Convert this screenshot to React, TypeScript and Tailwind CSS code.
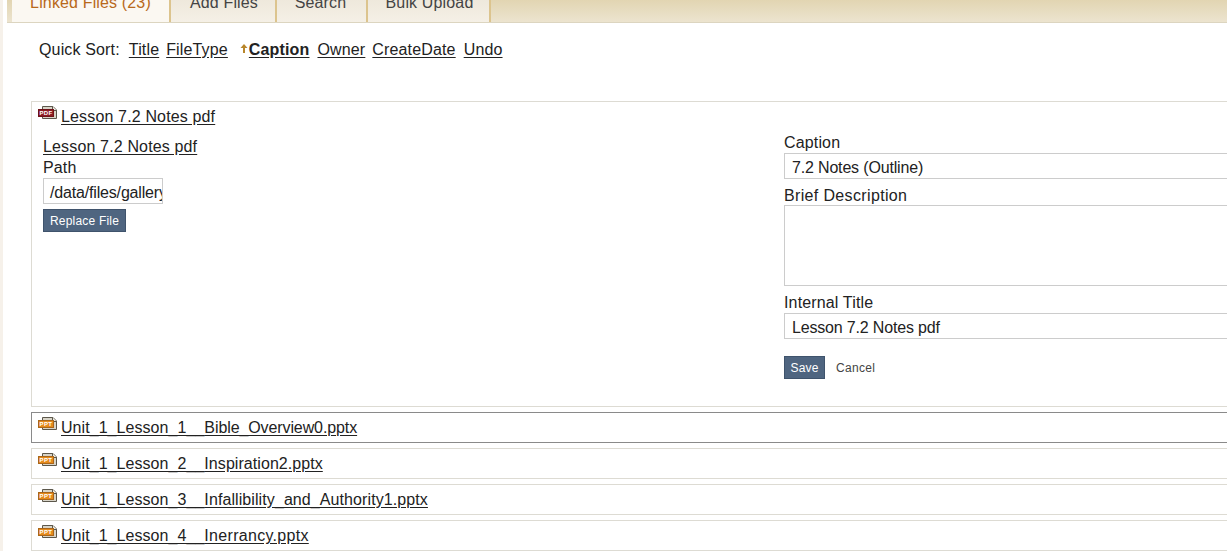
import React from 'react';

function FileIcon({ label, dark, light }: { label: string; dark: string; light: string }) {
  return (
    <svg width="19" height="14" viewBox="0 0 19 14" className="shrink-0">
      <path d="M4.5 0.5H15L18.5 4V12.5H4.5Z" fill="#d8d4c8" stroke="#5c574b" />
      <path d="M14.5 0.5V4.5H18.5" fill="#f4f1e8" stroke="#5c574b" />
      <rect x="0.5" y="3.5" width="15" height="7" fill={dark} stroke={light} />
      <text x="8" y="9.4" textAnchor="middle" fontSize="6" fontWeight="700" letterSpacing="0.4" fill="#fff" fontFamily="'Liberation Sans', sans-serif">
        {label}
      </text>
    </svg>
  );
}

const PdfIcon = () => <FileIcon label="PDF" dark="#8c1c22" light="#6e1218" />;
const PptIcon = () => <FileIcon label="PPT" dark="#e58a1c" light="#a9661a" />;

function Tab({ label, active, className }: { label: string; active?: boolean; className: string }) {
  return (
    <div
      className={`h-[26px] -mt-[4px] flex items-start justify-center border-r-2 border-[#dcc48e] ${className} ${
        active ? 'bg-[#fbf8f2] text-[#b8691b]' : 'bg-gradient-to-b from-[#ede7da] to-[#f5f0e6] text-[#444444]'
      }`}
    >
      <span className="leading-[18px] -mt-[2px]">{label}</span>
    </div>
  );
}

function FileRow({ prefix, name, track, selected }: { prefix: string; name: string; track: string; selected?: boolean }) {
  return (
    <div className={`h-[31px] border flex items-start pl-[6px] ${selected ? 'border-[#8a8a8a]' : 'border-[#dddbd3]'}`}>
      <div className="mt-[4px]">
        <PptIcon />
      </div>
      <a className="ml-[4px] mt-[6px] leading-[18px] underline underline-offset-2 whitespace-nowrap tracking-[0.06px]">
        {prefix}
        <span className={track}>{name}</span>
      </a>
    </div>
  );
}

function Field({ label, value }: { label: string; value: string }) {
  return (
    <div>
      <div className="leading-[18px]">{label}</div>
      <div className="h-[26px] mt-[1px] border border-[#cccccc] pl-[7px] leading-[27px] bg-white tracking-[-0.17px]">{value}</div>
    </div>
  );
}

export default function App() {
  return (
    <div className="w-[1227px] h-[551px] overflow-hidden bg-white border-l-[3px] border-[#f6f1ea] text-[16px] tracking-[0.15px] text-[#222222] font-['Liberation_Sans',Arial,sans-serif]">
      <div className="h-[23px] ml-[4px] overflow-hidden flex pl-[5px] bg-gradient-to-b from-[#e2d5b2] to-[#ece4cf] border-b border-[#dcd5c0]">
        <Tab label="Linked Files (23)" active className="w-[159px]" />
        <Tab label="Add Files" className="w-[106px] pl-[2px]" />
        <Tab label="Search" className="w-[91px] pr-[2px]" />
        <Tab label="Bulk Upload" className="w-[123px] pl-[2px]" />
      </div>

      <div className="w-[1300px] pl-[28px]">
        <div className="flex items-center h-[18px] mt-[18px] pl-[8px] whitespace-nowrap">
          <span>Quick Sort:</span>
          <a className="ml-[9px] underline underline-offset-2">Title</a>
          <a className="ml-[7px] underline underline-offset-2">FileType</a>
          <svg width="8" height="9" viewBox="0 0 8 9" className="ml-[12px] -mt-[3px]">
            <path d="M4 0L7.5 4H5V9H3V4H0.5Z" fill="#b8862b" />
          </svg>
          <a className="ml-[1px] font-bold underline underline-offset-2">Caption</a>
          <a className="ml-[8px] underline underline-offset-2">Owner</a>
          <a className="ml-[7px] underline underline-offset-2">CreateDate</a>
          <a className="ml-[8px] underline underline-offset-2">Undo</a>
        </div>

        <div className="h-[306px] mt-[42px] border border-[#dddbd3] pl-[6px]">
          <div className="flex items-start">
            <div className="mt-[4px]">
              <PdfIcon />
            </div>
            <a className="ml-[4px] mt-[6px] leading-[18px] underline underline-offset-2">Lesson 7.2 Notes pdf</a>
          </div>

          <div className="flex mt-[2px] pl-[5px]">
            <div className="w-[741px] pt-[10px]">
              <a className="block leading-[18px] underline underline-offset-2">Lesson 7.2 Notes pdf</a>
              <div className="leading-[18px] mt-[3px]">Path</div>
              <div className="w-[120px] h-[26px] mt-[1px] border border-[#cccccc] pl-[6px] leading-[27px] overflow-hidden whitespace-nowrap tracking-[-0.17px]">
                /data/files/gallery/
              </div>
              <button className="block w-[83px] h-[23px] mt-[5px] bg-[#4f6580] border border-[#3f536c] text-white text-[12px] tracking-[0.2px]">
                Replace File
              </button>
            </div>

            <div className="w-[470px] pt-[6px]">
              <Field label="Caption" value="7.2 Notes (Outline)" />
              <div className="leading-[18px] mt-[8px] tracking-[0.35px]">Brief Description</div>
              <div className="h-[81px] border border-[#cccccc]" />
              <div className="mt-[8px]">
                <Field label="Internal Title" value="Lesson 7.2 Notes pdf" />
              </div>
              <div className="flex items-center mt-[17px]">
                <button className="w-[41px] h-[23px] bg-[#4f6580] border border-[#3f536c] text-white text-[12px]">
                  Save
                </button>
                <a className="ml-[11px] text-[12px] text-[#444444] tracking-[0.3px]">Cancel</a>
              </div>
            </div>
          </div>
        </div>

        <div className="flex flex-col gap-[5px] mt-[5px]">
          <FileRow prefix="Unit_1_Lesson_1__" name="Bible_Overview0.pptx" track="tracking-[-0.1px]" selected />
          <FileRow prefix="Unit_1_Lesson_2__" name="Inspiration2.pptx" track="tracking-[0.06px]" />
          <FileRow prefix="Unit_1_Lesson_3__" name="Infallibility_and_Authority1.pptx" track="tracking-[0.09px]" />
          <FileRow prefix="Unit_1_Lesson_4__" name="Inerrancy.pptx" track="tracking-[0.3px]" />
        </div>
      </div>
    </div>
  );
}
